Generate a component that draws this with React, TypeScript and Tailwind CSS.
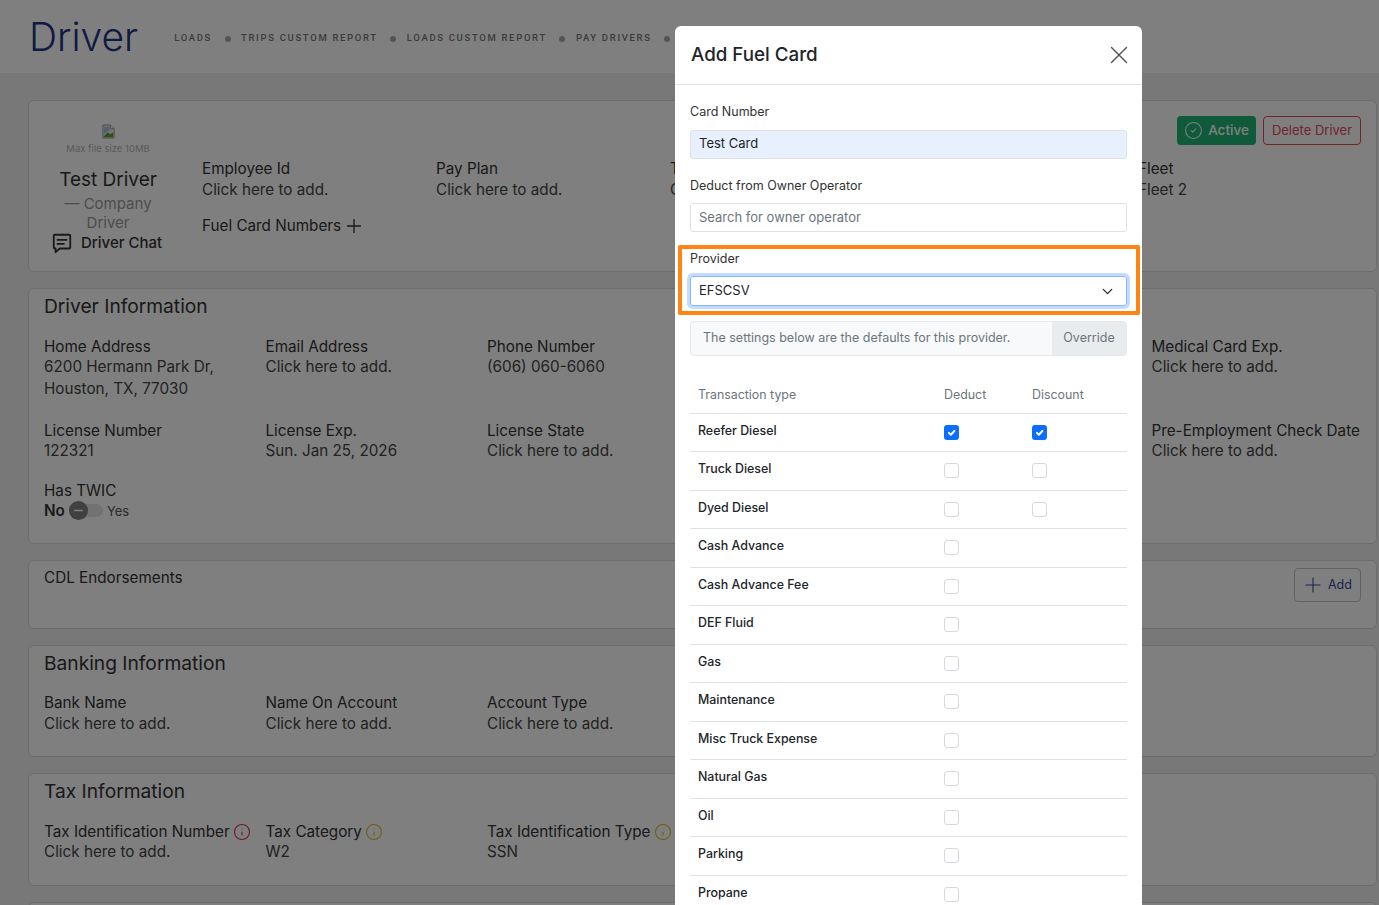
import { ChevronDown, CircleCheck, Info, Minus, Plus, X } from 'lucide-react';

const ADD = 'Click here to add.';

// the two middle columns sit behind the modal, so they stay empty
const driverInfo = [
  { label: 'Home Address', lines: ['6200 Hermann Park Dr,', 'Houston, TX, 77030'] },
  { label: 'Email Address', lines: [ADD] },
  { label: 'Phone Number', lines: ['(606) 060-6060'] },
  { label: '', lines: [] },
  { label: '', lines: [] },
  { label: 'Medical Card Exp.', lines: [ADD] },
  { label: 'License Number', lines: ['122321'] },
  { label: 'License Exp.', lines: ['Sun. Jan 25, 2026'] },
  { label: 'License State', lines: [ADD] },
  { label: '', lines: [] },
  { label: '', lines: [] },
  { label: 'Pre-Employment Check Date', lines: [ADD] },
];

const rows = [
  { name: 'Reefer Diesel', discount: true, checked: true },
  { name: 'Truck Diesel', discount: true },
  { name: 'Dyed Diesel', discount: true },
  { name: 'Cash Advance' },
  { name: 'Cash Advance Fee' },
  { name: 'DEF Fluid' },
  { name: 'Gas' },
  { name: 'Maintenance' },
  { name: 'Misc Truck Expense' },
  { name: 'Natural Gas' },
  { name: 'Oil' },
  { name: 'Parking' },
  { name: 'Propane' },
];

function Field({ label, lines, className = '' }: { label: string; lines: string[]; className?: string }) {
  return (
    <div className={`text-[15.25px] leading-[22px] whitespace-nowrap text-[#444] ${className}`}>
      <div className="mb-[-0.5px] leading-[20px] text-[#333]">{label}</div>
      {lines.map((l) => (
        <div key={l}>{l}</div>
      ))}
    </div>
  );
}

function InfoField({ label, value, color, gap }: { label: string; value: string; color: string; gap: string }) {
  return (
    <div className="text-[15.25px] leading-[22px] whitespace-nowrap text-[#444]">
      <div className={`mb-[-0.5px] flex items-center leading-[20px] text-[#333] ${gap}`}>
        {label}
        <Info className={`h-[18px] w-[18px] ${color}`} strokeWidth={1.5} />
      </div>
      {value}
    </div>
  );
}

function Card({ title, className = '', children }: { title: string; className?: string; children?: React.ReactNode }) {
  return (
    <section className={`rounded-md border border-[#d9d9d9] bg-white pl-[15px] ${className}`}>
      <h2 className="pt-[4px] text-[19.2px] leading-[26px] font-normal text-[#333]">{title}</h2>
      {children}
    </section>
  );
}

function Checkbox({ checked }: { checked?: boolean }) {
  if (checked) {
    return (
      <span className="flex h-[15px] w-[15px] items-center justify-center rounded-[3px] bg-[#0d6efd]">
        <svg viewBox="0 0 20 20" className="h-[13px] w-[13px]" fill="none" stroke="#fff" strokeWidth="3" strokeLinecap="round" strokeLinejoin="round">
          <path d="M6 10.5l3 3 5.5-6" />
        </svg>
      </span>
    );
  }
  return <span className="block h-[15px] w-[15px] rounded-[3px] border border-[#d5d8dc] bg-white" />;
}

function NavDot() {
  return <span className="h-[6px] w-[6px] translate-x-[1px] rounded-full bg-[#aaa]" />;
}

function BrokenImage() {
  return (
    <svg viewBox="0 0 16 16" className="h-[15px] w-[15px]">
      <path d="M2 1h8l4 4v10H2z" fill="#e8e8e8" stroke="#9a9a9a" strokeWidth="1" />
      <path d="M3 13l4-4 3 2 3-2v5H3z" fill="#5aa02c" />
      <path d="M3 3h6v4l-6 4z" fill="#a9c4ee" />
      <path d="M10 1v4h4" fill="#fff" stroke="#9a9a9a" strokeWidth="1" />
    </svg>
  );
}

function ChatIcon() {
  return (
    <svg viewBox="0 0 24 24" className="h-[22px] w-[22px] shrink-0" fill="none" stroke="currentColor" strokeWidth="2" strokeLinejoin="round" strokeLinecap="round">
      <path d="M4 3h16a1 1 0 0 1 1 1v13a1 1 0 0 1-1 1H9.5L5 22v-4H4a1 1 0 0 1-1-1V4a1 1 0 0 1 1-1z" />
      <path d="M7 8.5h10M7 13h7" />
    </svg>
  );
}

export default function App() {
  return (
    <div className="relative h-[905px] overflow-hidden bg-[#f0f0f0] font-['Inter',sans-serif]">
      {/* Header */}
      <header className="flex h-[73px] items-center bg-white pl-[29px]">
        <h1 className="text-[39px] leading-none font-light text-[#1f3585]">Driver</h1>
        <nav className="mt-[4px] ml-[36px] flex items-center gap-[11.5px] font-['Roboto',sans-serif] text-[9.5px] font-medium tracking-[1.67px] text-[#777] uppercase">
          <span>Loads</span>
          <NavDot />
          <span>Trips Custom Report</span>
          <NavDot />
          <span>Loads Custom Report</span>
          <NavDot />
          <span>Pay Drivers</span>
          <NavDot />
        </nav>
      </header>

      <main className="flex flex-col gap-[16px] pt-[27px] pr-[2px] pl-[28px]">
        {/* Profile */}
        <section className="relative flex h-[172px] rounded-md border border-[#d9d9d9] bg-white">
          <div className="ml-[15px] flex w-[128px] flex-col items-center pt-[23px] text-center">
            <BrokenImage />
            <div className="mt-[3px] text-[9.5px] leading-[14px] text-[#b5b5b5]">Max file size 10MB</div>
            <div className="mt-[11px] text-[19px] leading-[26px] text-[#333]">Test Driver</div>
            <div className="mt-[2px] w-[100px] text-[15px] leading-[18.5px] text-[#999]">— Company Driver</div>
            <div className="flex w-[114px] items-center gap-[8px] whitespace-nowrap text-[15px] font-medium text-[#333]">
              <ChatIcon />
              Driver Chat
            </div>
          </div>
          <div className="ml-[30px] grid flex-1 grid-cols-[repeat(5,234px)] content-start pt-[58px]">
            <Field label="Employee Id" lines={[ADD]} />
            <Field label="Pay Plan" lines={[ADD]} />
            <Field label="Terminal" lines={[ADD]} />
            <div />
            <Field label="Fleet" lines={['Fleet 2']} />
            <div className="mt-[14.5px] flex h-[22px] items-center text-[15.25px] whitespace-nowrap text-[#333]">
              Fuel Card Numbers
              <Plus className="ml-[1.5px] h-[22px] w-[22px]" strokeWidth={1.5} />
            </div>
          </div>
          <div className="absolute top-[15px] right-[15px] flex gap-[7px]">
            <span className="flex h-[29px] w-[79px] items-center justify-center gap-[5px] rounded-[4px] bg-[#1cb574] text-[13.5px] font-medium text-white">
              <CircleCheck className="h-[19px] w-[19px]" strokeWidth={1.3} />
              Active
            </span>
            <span className="flex h-[29px] w-[98px] items-center justify-center rounded-[4px] border border-[#e8485a] text-[13px] text-[#e8485a]">
              Delete Driver
            </span>
          </div>
        </section>

        <Card title="Driver Information" className="h-[256px]">
          <div className="mt-[17.5px] grid grid-cols-[repeat(6,221.5px)] gap-y-[20.5px]">
            {driverInfo.map((f, i) => (
              <Field key={i} label={f.label} lines={f.lines} />
            ))}
            <div className="col-span-6 mt-[-2px] text-[15.25px] leading-[20px] text-[#333]">
              Has TWIC
              <div className="flex items-center text-[#333]">
                <span className="font-semibold">No</span>
                <span className="relative ml-[4px] flex h-[13px] w-[34px] items-center rounded-full bg-[#e5e5e5]">
                  <span className="flex h-[19px] w-[19px] items-center justify-center rounded-full bg-[#808080]">
                    <Minus className="h-[13px] w-[13px] text-white" strokeWidth={3} />
                  </span>
                </span>
                <span className="ml-[4px] text-[13px] text-[#555]">Yes</span>
              </div>
            </div>
          </div>
        </Card>

        <section className="relative h-[68.5px] rounded-md border border-[#d9d9d9] bg-white pl-[15px]">
          <h2 className="pt-[6px] text-[15.25px] leading-[21px] text-[#333]">CDL Endorsements</h2>
          <button className="absolute top-[7px] right-[15px] flex h-[34px] w-[67px] items-center gap-[3px] rounded-[4px] border border-[#c4c4c4] pl-[6px] text-[12.5px] text-[#34479c]">
            <Plus className="h-[24px] w-[24px]" strokeWidth={1.1} />
            Add
          </button>
        </section>

        <Card title="Banking Information" className="h-[112.5px]">
          <div className="mt-[17.5px] grid grid-cols-[repeat(6,221.5px)]">
            <Field label="Bank Name" lines={[ADD]} />
            <Field label="Name On Account" lines={[ADD]} />
            <Field label="Account Type" lines={[ADD]} />
          </div>
        </Card>

        <Card title="Tax Information" className="h-[113px]">
          <div className="mt-[17.5px] grid grid-cols-[repeat(6,221.5px)]">
            <InfoField label="Tax Identification Number" value={ADD} color="text-[#dc3545]" gap="gap-[3px]" />
            <InfoField label="Tax Category" value="W2" color="text-[#e8b923]" gap="gap-[3px]" />
            <InfoField label="Tax Identification Type" value="SSN" color="text-[#e8b923]" gap="gap-[3px]" />
          </div>
        </Card>

        <section className="h-[100px] rounded-md border border-[#d9d9d9] bg-white" />
      </main>

      {/* Modal */}
      <div className="absolute inset-0 bg-black/50">
        <div className="absolute top-[26px] left-[675px] w-[467px] rounded-t-md bg-white">
          <div className="flex h-[59px] items-center justify-between border-b border-[#dee2e6] pr-[8px] pl-[16px]">
            <h3 className="text-[18.75px] font-medium text-[#212529]">Add Fuel Card</h3>
            <X className="h-[30px] w-[30px] text-[#555]" strokeWidth={1.15} />
          </div>
          <div className="px-[15px] pt-[19px]">
            <label className="block text-[12.5px] leading-[16px] text-[#333]">Card Number</label>
            <div className="mt-[10px] flex h-[29px] items-center rounded-[3px] border border-[#dee2e6] bg-[#e8f0fe] px-[8px] pb-[1px] text-[13px] text-[#212529]">
              Test Card
            </div>
            <label className="mt-[19px] block text-[12.5px] leading-[16px] text-[#333]">Deduct from Owner Operator</label>
            <div className="mt-[9px] flex h-[29px] items-center rounded-[3px] border border-[#dee2e6] px-[8px] text-[13px] text-[#6c757d]">
              Search for owner operator
            </div>
            <label className="mt-[19px] block text-[12.5px] leading-[16px] text-[#333]">Provider</label>
            <div className="mt-[9px] flex h-[30px] items-center justify-between rounded-[3px] border border-[#86b7fe] px-[8px] text-[13px] text-[#212529] shadow-[0_0_0_3px_rgba(13,110,253,0.25)]">
              EFSCSV
              <ChevronDown className="mr-[2px] h-[17px] w-[17px]" strokeWidth={1.8} />
            </div>
            <div className="mt-[15px] flex h-[35px] overflow-hidden rounded-[4px] border border-[#e5e7ea] bg-[#f8f9fa] text-[12.5px] text-[#6c757d]">
              <span className="flex flex-1 items-center pl-[12px]">The settings below are the defaults for this provider.</span>
              <span className="flex w-[74px] items-center justify-center bg-[#e9ecef]">Override</span>
            </div>
            <table className="mt-[19px] w-full table-fixed text-[12.4px]">
              <thead>
                <tr className="h-[38px] border-b border-[#dee2e6] text-[#6c757d]">
                  <th className="w-[254px] pt-[4px] pl-[8px] text-left font-normal">Transaction type</th>
                  <th className="w-[88px] pt-[4px] text-left font-normal">Deduct</th>
                  <th className="pt-[4px] text-left font-normal">Discount</th>
                </tr>
              </thead>
              <tbody>
                {rows.map((r) => (
                  <tr key={r.name} className="h-[38.5px] border-b border-[#dee2e6] text-[#212529]">
                    <td className="pb-[2px] pl-[8px] font-medium">{r.name}</td>
                    <td>
                      <Checkbox checked={r.checked} />
                    </td>
                    <td>{r.discount && <Checkbox checked={r.checked} />}</td>
                  </tr>
                ))}
              </tbody>
            </table>
          </div>
        </div>
        {/* Orange highlight */}
        <div className="absolute top-[245px] left-[678px] h-[69.5px] w-[461.5px] rounded-[2px] border-[4px] border-[#ff8411]" />
      </div>
    </div>
  );
}
